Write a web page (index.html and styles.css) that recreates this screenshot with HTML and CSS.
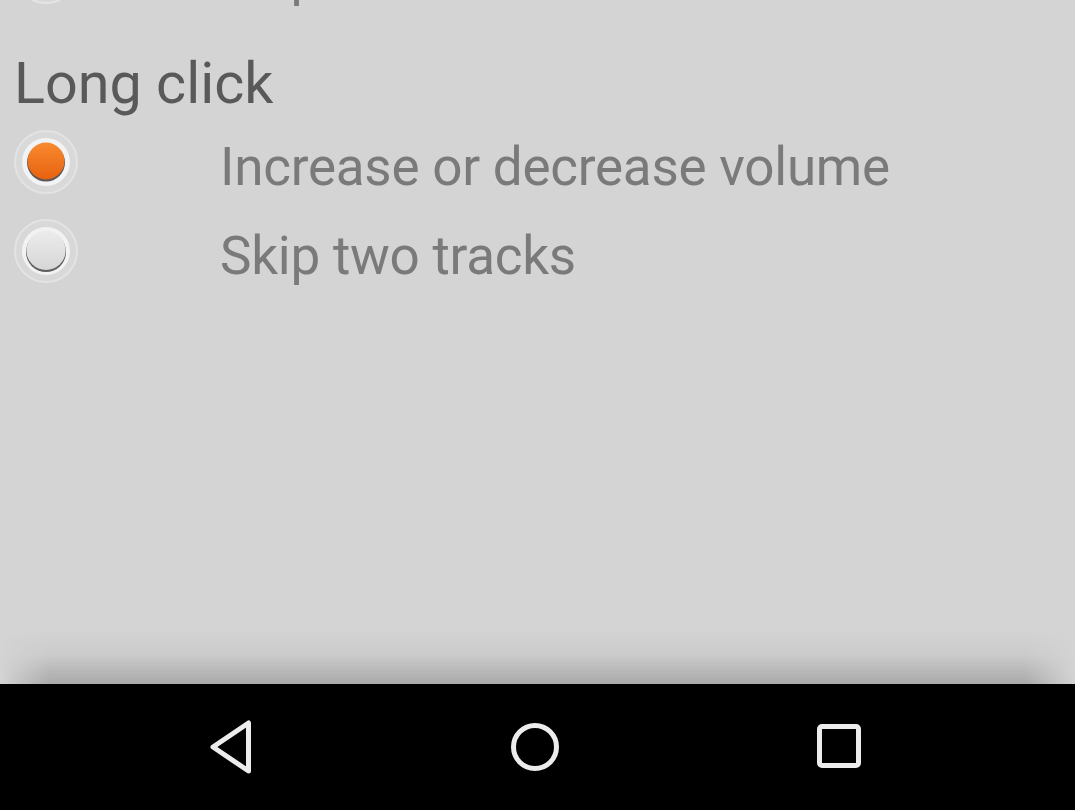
FILE: index.html
```html
<!DOCTYPE html>
<html>
<head>
<meta charset="utf-8">
<link rel="stylesheet" href="styles.css">
</head>
<body>
<div class="screen">
  <main class="content">
    <div class="option option-cut">
      <svg class="radio" viewBox="0 0 66 66" width="66" height="66">
        <circle cx="33" cy="33" r="31" fill="#d8d8d8" stroke="#e4e4e4" stroke-width="2"/>
        <circle cx="33" cy="33" r="23.5" fill="#f3f3f3"/>
      </svg>
      <span class="label">Skip track</span>
    </div>
    <h2 class="section">Long click</h2>
    <div class="option">
      <svg class="radio" viewBox="0 0 66 66" width="66" height="66">
        <defs>
          <linearGradient id="og" x1="0" y1="0" x2="0" y2="1">
            <stop offset="0" stop-color="#f88a2f"/>
            <stop offset="1" stop-color="#e8620f"/>
          </linearGradient>
        </defs>
        <circle cx="33" cy="33" r="31" fill="#d9d9d9" stroke="#e3e3e3" stroke-width="2"/>
        <circle cx="33" cy="33" r="24" fill="#f1f3f5"/>
        <circle cx="33" cy="33.6" r="19" fill="#5e5656"/>
        <circle cx="33" cy="32" r="18.5" fill="url(#og)"/>
      </svg>
      <span class="label">Increase or decrease volume</span>
    </div>
    <div class="option">
      <svg class="radio" viewBox="0 0 66 66" width="66" height="66">
        <defs>
          <linearGradient id="gg" x1="0" y1="0" x2="0" y2="1">
            <stop offset="0" stop-color="#ececec"/>
            <stop offset="1" stop-color="#d6d6d6"/>
          </linearGradient>
        </defs>
        <circle cx="33" cy="33" r="31" fill="#d8d8d8" stroke="#e3e3e3" stroke-width="2"/>
        <circle cx="33" cy="33" r="24" fill="#f2f2f2"/>
        <circle cx="33" cy="34" r="20" fill="#5f5f5f"/>
        <circle cx="33" cy="32.4" r="19.6" fill="url(#gg)"/>
      </svg>
      <span class="label">Skip two tracks</span>
    </div>
  </main>
  <nav class="navbar">
    <svg class="nav-icon" viewBox="0 0 50 56" width="50" height="56">
      <path d="M42.5 4 L42.5 52 L7 28 Z" fill="none" stroke="#ececec" stroke-width="5" stroke-linejoin="round"/>
    </svg>
    <svg class="nav-icon" viewBox="0 0 50 56" width="50" height="56">
      <circle cx="25" cy="28" r="21.5" fill="none" stroke="#ececec" stroke-width="5"/>
    </svg>
    <svg class="nav-icon" viewBox="0 0 50 56" width="50" height="56">
      <rect x="5.5" y="7.5" width="39" height="39" rx="2.5" fill="none" stroke="#ececec" stroke-width="5"/>
    </svg>
  </nav>
</div>
</body>
</html>
```
FILE: styles.css
```css
html, body {
  margin: 0;
  padding: 0;
}

body {
  width: 1075px;
  height: 810px;
  overflow: hidden;
  font-family: Roboto, "Noto Sans", "Liberation Sans", sans-serif;
}

.screen {
  display: flex;
  flex-direction: column;
  height: 810px;
}

.content {
  flex: 1;
  position: relative;
  overflow: hidden;
  background: #d4d4d4;
}

.content::after {
  content: "";
  position: absolute;
  left: 0;
  right: 0;
  bottom: 0;
  height: 54px;
  background: linear-gradient(to bottom, rgba(0,0,0,0) 0%, rgba(0,0,0,0.04) 45%, rgba(0,0,0,0.2) 100%);
  -webkit-mask-image: linear-gradient(to right, transparent 0, #000 50px, #000 calc(100% - 50px), transparent 100%);
  mask-image: linear-gradient(to right, transparent 0, #000 50px, #000 calc(100% - 50px), transparent 100%);
}

.option {
  display: flex;
  align-items: center;
  height: 89px;
  padding-left: 13px;
}

.option-cut {
  margin-top: -72.5px;
}

.radio {
  flex: none;
  display: block;
}

.label {
  align-self: flex-start;
  margin-top: 23px;
  margin-left: 141px;
  font-size: 53px;
  line-height: 53px;
  letter-spacing: -0.25px;
  color: #7a7a7a;
  white-space: nowrap;
}

.section {
  margin: 0;
  height: 101px;
  box-sizing: border-box;
  padding: 38.5px 0 0 14px;
  font-size: 57.5px;
  line-height: 57px;
  font-weight: 400;
  color: #595959;
}

.navbar {
  flex: none;
  height: 126px;
  background: #000;
  display: flex;
  align-items: center;
  justify-content: center;
  gap: 254px;
  padding-right: 6px;
}

.nav-icon {
  display: block;
}
```
